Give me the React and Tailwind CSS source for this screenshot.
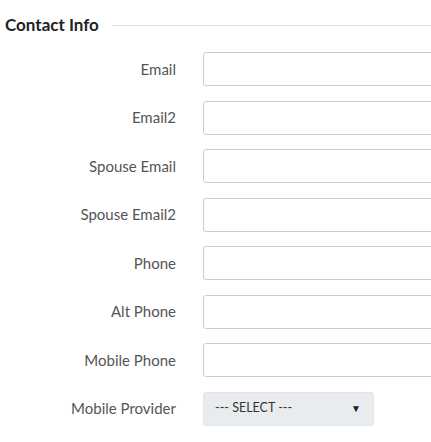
const fields = ['Email', 'Email2', 'Spouse Email', 'Spouse Email2', 'Phone', 'Alt Phone', 'Mobile Phone'];

function Row({ label, children }) {
  return (
    <div className="flex items-center h-[34px]">
      <label className="w-[176px] shrink-0 text-right text-[15px] text-[#555]">{label}</label>
      <div className="ml-[27px] flex-1 min-w-0">{children}</div>
    </div>
  );
}

export default function App() {
  return (
    <div className="w-[431px] h-[442px] overflow-hidden bg-white font-['Lato','Open_Sans',sans-serif]">
      <div className="flex items-center pt-[14px] pl-[5px]">
        <h3 className="text-[17px] font-bold text-[#222] leading-[22px]">Contact Info</h3>
        <div className="flex-1 ml-[13px] h-px bg-[#dde4ee]" />
      </div>
      <div className="mt-[16px] flex flex-col gap-[14.5px]">
        {fields.map(f => (
          <Row key={f} label={f}>
            <input className="w-[240px] h-[34px] border border-[#ccc] rounded-[3px] px-2 outline-none" />
          </Row>
        ))}
        <Row label="Mobile Provider">
          <div className="w-[171px] h-[34px] flex items-center justify-between pl-[11px] pr-[12px] bg-[#e9ecef] border border-[#e2e5e9] rounded-[3px]">
            <span className="text-[12.5px] text-[#333]">--- SELECT ---</span>
            <span className="text-[10px] text-[#222]">▼</span>
          </div>
        </Row>
      </div>
    </div>
  );
}
